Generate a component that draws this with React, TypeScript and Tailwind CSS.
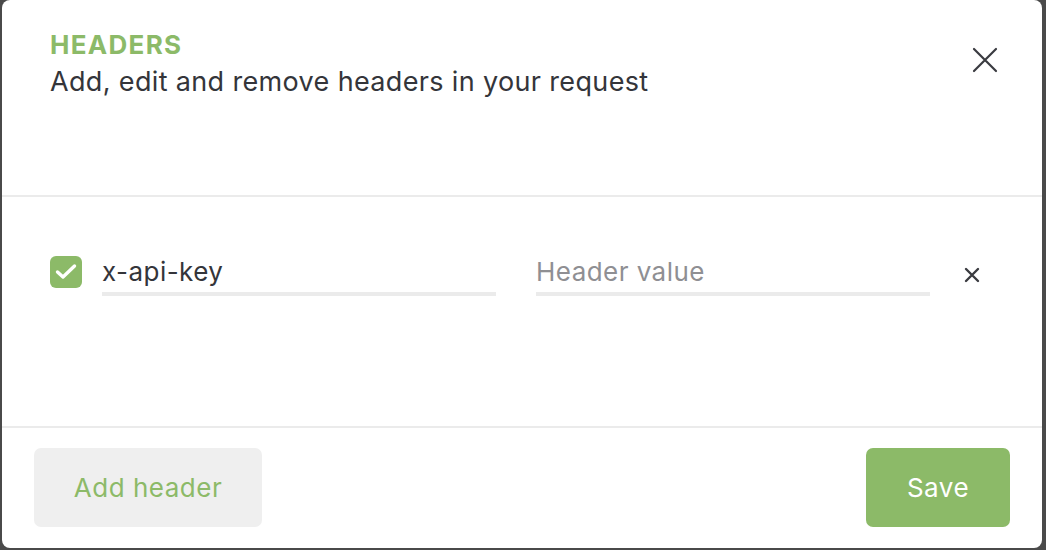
import React from "react";

const App: React.FC = () => {
  return (
    <div
      className="h-[550px] w-[1046px] bg-[#4a4a4a] pl-[2px] pr-[4px] pb-[2px]"
      style={{ fontFamily: "Inter, 'Noto Sans', sans-serif" }}
    >
      <div className="flex h-full flex-col rounded-[8px] bg-white">
        {/* header */}
        <div className="flex h-[197px] items-start justify-between border-b-2 border-[#ebebeb] pl-[48px] pr-[44px] pt-[30px]">
          <div>
            <div className="text-[26px] font-bold leading-[30px] tracking-[1.3px] text-[#8cba68]">
              HEADERS
            </div>
            <div className="mt-[5px] text-[27px] leading-[34px] tracking-[0.35px] text-[#34353a]">
              Add, edit and remove headers in your request
            </div>
          </div>
          <button className="mt-[17px] text-[#3a3b40]">
            <svg width="26" height="26" viewBox="0 0 26 26" fill="none">
              <path
                d="M2 2L24 24M24 2L2 24"
                stroke="currentColor"
                strokeWidth="2.2"
                strokeLinecap="round"
              />
            </svg>
          </button>
        </div>

        {/* rows */}
        <div className="h-[231px] border-b-2 border-[#ebebeb] pl-[48px] pr-[62px] pt-[59px]">
          <div className="flex items-start">
            <div className="flex h-[32px] w-[32px] items-center justify-center rounded-[6px] bg-[#8cba68]">
              <svg width="24" height="18" viewBox="0 0 24 18" fill="none">
                <path
                  d="M3.5 9L9 14L20.5 3"
                  stroke="white"
                  strokeWidth="3.4"
                  strokeLinecap="round"
                  strokeLinejoin="round"
                />
              </svg>
            </div>
            <div className="ml-[20px] w-[394px] border-b-[4px] border-[#ebebeb] pb-[4px] text-[26px] leading-[32px] tracking-[0.45px] text-[#34353a]">
              x-api-key
            </div>
            <div className="ml-[40px] w-[394px] border-b-[4px] border-[#ebebeb] pb-[4px] text-[26px] leading-[32px] tracking-[0.45px] text-[#8f8f93]">
              Header value
            </div>
            <button className="ml-auto mt-[11px] text-[#3a3b40]">
              <svg width="16" height="16" viewBox="0 0 16 16" fill="none">
                <path
                  d="M2 2L14 14M14 2L2 14"
                  stroke="currentColor"
                  strokeWidth="2.4"
                  strokeLinecap="round"
                />
              </svg>
            </button>
          </div>
        </div>

        {/* footer */}
        <div className="flex flex-1 items-start justify-between pl-[32px] pr-[32px] pt-[20px]">
          <button className="h-[79px] w-[228px] rounded-[7px] bg-[#efefef] text-[26px] tracking-[0.5px] text-[#8cba68]">
            Add header
          </button>
          <button className="h-[79px] w-[144px] rounded-[7px] bg-[#8cba68] text-[26px] tracking-[0.5px] text-white">
            Save
          </button>
        </div>
      </div>
    </div>
  );
};

export default App;
